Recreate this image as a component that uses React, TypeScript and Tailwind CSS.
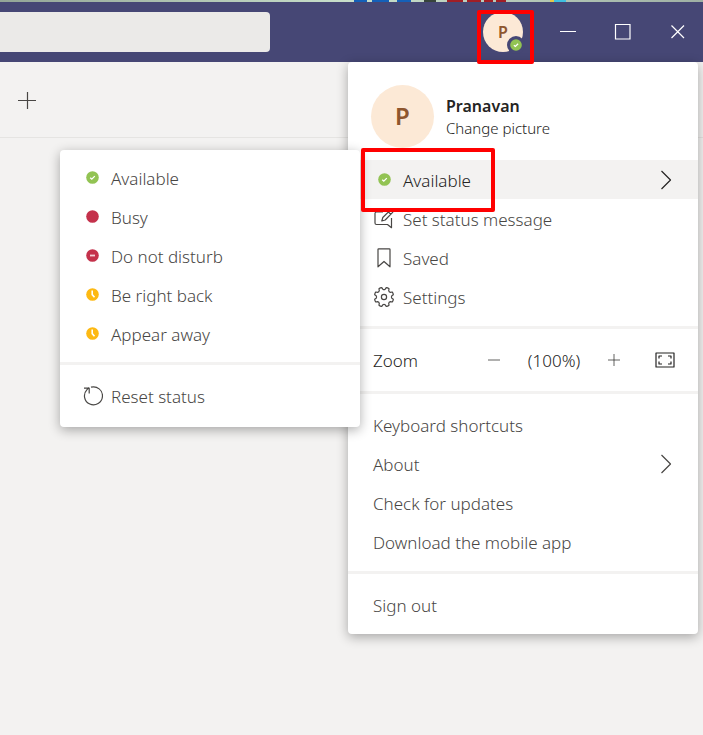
import React from "react";

type StatusKind = "available" | "busy" | "dnd" | "away";

const fontStack = "font-['Noto_Sans','Open_Sans',sans-serif]";

function StatusDot({ kind, className = "size-[13px]" }: { kind: StatusKind; className?: string }) {
  const fill = kind === "available" ? "#92c353" : kind === "away" ? "#fdb913" : "#c4314b";
  return (
    <svg viewBox="0 0 13 13" className={`shrink-0 ${className}`} aria-hidden="true">
      <circle cx="6.5" cy="6.5" r="6.3" fill={fill} />
      {kind === "available" && (
        <path d="M4.2 6.7 5.8 8.1 8.8 5.1" fill="none" stroke="#fff" strokeWidth="1.3" />
      )}
      {kind === "dnd" && <path d="M4 6.5h5" stroke="#f3d0d6" strokeWidth="1.8" />}
      {kind === "away" && (
        <path d="M6.2 2.6v4l2.3 2.6" fill="none" stroke="#fff" strokeWidth="1.6" />
      )}
    </svg>
  );
}

function Line({ d, className = "size-5", children }: { d: string; className?: string; children?: React.ReactNode }) {
  return (
    <svg viewBox="0 0 20 20" className={`shrink-0 ${className}`} fill="none" stroke="currentColor" strokeWidth="1.2" strokeLinejoin="round" aria-hidden="true">
      <path d={d} />
      {children}
    </svg>
  );
}

function Chevron() {
  return <Line className="ml-auto size-5" d="M5.500 1l9 9-9 9" />;
}

function MessageIcon() {
  return (
    <Line d="M9 3H2.500Q1 3 1 4.500v9.500Q1 15.500 2.500 15.500H13.500l4 3.200V9">
      <path d="m7.800 12 1-3.500L16 1.300a1.600 1.600 0 0 1 2.400 2.400L11.200 11ZM14.500 3l2.300 2.300" />
    </Line>
  );
}

const gearPath = (() => {
  const point = (degrees: number, radius: number) => {
    const a = (degrees * Math.PI) / 180;
    return `${(10 + radius * Math.sin(a)).toFixed(2)} ${(10 - radius * Math.cos(a)).toFixed(2)}`;
  };
  let d = "";
  for (let i = 0; i < 8; i++) {
    const a = i * 45 + 22.5;
    d += `${i === 0 ? "M" : "L"}${point(a - 9, 9.6)}Q${point(a, 10)} ${point(a + 9, 9.6)}`;
    d += `L${point(a + 14, 7.9)}Q${point(a + 22.5, 7)} ${point(a + 31, 7.9)}`;
  }
  return d + "Z";
})();

function GearIcon() {
  return (
    <Line d={gearPath}>
      <circle cx="10" cy="10" r="2.600" />
    </Line>
  );
}

function Divider() {
  return <div role="separator" className="h-[3px] bg-[#f3f2f1]" />;
}

function Item({ icon, children, chevron = false, active = false, marked = false }: { icon?: React.ReactNode; children: React.ReactNode; chevron?: boolean; active?: boolean; marked?: boolean }) {
  return (
    <button type="button" role="menuitem" className={`relative flex h-[39px] w-full items-center pr-[22px] pl-[25px] text-left ${active ? "bg-[#f3f2f1] text-[#252423]" : ""}`}>
      {icon && <span className="mr-2 flex w-[22px] justify-center">{icon}</span>}
      <span className="pt-0.5">{children}</span>
      {chevron && <Chevron />}
      {marked && <span className="absolute -top-3 left-[13px] z-20 h-16 w-[134px] rounded-xs border-4 border-[#ff0000]" />}
    </button>
  );
}

const statuses: { kind: StatusKind; label: string }[] = [
  { kind: "available", label: "Available" },
  { kind: "busy", label: "Busy" },
  { kind: "dnd", label: "Do not disturb" },
  { kind: "away", label: "Be right back" },
  { kind: "away", label: "Appear away" },
];

function StatusMenu() {
  return (
    <div role="menu" aria-label="Status" className="absolute top-[88px] right-[343px] z-10 w-[300px] rounded bg-white pt-2 shadow-[0_3px_12px_rgba(0,0,0,0.32)]">
      {statuses.map((s) => (
        <button key={s.label} type="button" role="menuitem" className="flex h-[39px] w-full items-center gap-3 px-[26px]">
          <StatusDot kind={s.kind} />
          <span className="pt-0.5">{s.label}</span>
        </button>
      ))}
      <div className="h-[9px]" />
      <Divider />
      <button type="button" role="menuitem" className="flex h-[62px] w-full items-center gap-2 px-[23px]">
        <Line d="M8 1.200A9 9 0 1 1 4 3.600L6 1.500M1 2.200h5.200v5.200" />
        <span className="pt-0.5">Reset status</span>
      </button>
    </div>
  );
}

function ProfileMenu() {
  return (
    <div role="menu" aria-label="Profile" className="absolute top-0 right-[5px] w-[350px] rounded bg-white shadow-[0_3px_12px_rgba(0,0,0,0.32)]">
      <div className="flex h-[98px] items-center gap-3 px-[23px] pt-2.5">
        <div className="flex size-[63px] items-center justify-center rounded-full bg-[#fce9d6] text-2xl font-semibold text-[#8e562e]">P</div>
        <div className="flex flex-col items-start pt-0.5 text-[#252423]">
          <span className="text-base leading-[22px] font-semibold">Pranavan</span>
          <button type="button" className="text-[15px] leading-[22px]">Change picture</button>
        </div>
      </div>
      <Item active chevron marked icon={<StatusDot kind="available" />}>Available</Item>
      <Item icon={<MessageIcon />}>Set status message</Item>
      <Item icon={<Line d="M4 1.500Q4 .8 4.700.8H15.300Q16 .8 16 1.500V18.800l-6-5.300-6 5.300Z" />}>Saved</Item>
      <Item icon={<GearIcon />}>Settings</Item>
      <div className="h-[10px]" />
      <Divider />
      <div className="flex h-[62px] items-center pr-[23px] pl-[25px] text-[#252423]">
        <span className="flex-1 pt-0.5">Zoom</span>
        <button type="button" aria-label="Zoom out"><Line className="size-3" d="M0 10h20" /></button>
        <span className="w-[108px] pt-0.5 text-center">(100%)</span>
        <button type="button" aria-label="Zoom in"><Line className="size-3" d="M0 10h20M10 0v20" /></button>
        <button type="button" aria-label="Full screen" className="ml-[35px]">
          <Line d="M1 3h18v14H1ZM7 6H4v2.500M13 6h3v2.500M7 14H4v-2.500M13 14h3v-2.500" />
        </button>
      </div>
      <Divider />
      <div className="pt-[11px] pb-[10px]">
        <Item>Keyboard shortcuts</Item>
        <Item chevron>About</Item>
        <Item>Check for updates</Item>
        <Item>Download the mobile app</Item>
      </div>
      <Divider />
      <div className="pt-[11px] pb-[10px]">
        <Item>Sign out</Item>
      </div>
    </div>
  );
}

function DesktopStrip() {
  return (
    <div className="h-0.5 bg-linear-to-r from-[#93a597] via-[#c9e0cb] to-[#9fb0a4]">
      <svg viewBox="0 0 703 2" preserveAspectRatio="none" className="block h-full w-full" aria-hidden="true">
        <path d="M354 1h13M372 1h17M397 1h14" stroke="#1560b8" strokeWidth="2" />
        <path d="M424 1h12" stroke="#37443c" strokeWidth="2" />
        <path d="M447 1h16M467 1h14M484 1h9M496 1h10" stroke="#a01e25" strokeWidth="2" />
        <path d="M550 1h4" stroke="#e5c84b" strokeWidth="2" />
        <path d="M554 1h12" stroke="#3fbfe0" strokeWidth="2" />
      </svg>
    </div>
  );
}

export default function App() {
  return (
    <div className={`min-h-screen overflow-hidden bg-[#f3f2f1] text-[17px] leading-6 font-light text-[#484644] ${fontStack}`}>
      <DesktopStrip />
      <header className="flex h-[60px] items-center justify-between bg-[#464775] pr-4 text-white">
        <input aria-label="Search" className="h-10 w-[270px] rounded-r bg-[#ebeae8]" />
        <div className="flex items-center">
          <button type="button" aria-label="Profile" className="relative mr-9 flex size-10 items-center justify-center rounded-full bg-[#fce9d6] text-base font-semibold text-[#8e562e]">
            P
            <span className="absolute -right-0.5 -bottom-0.5 rounded-full bg-[#464775] p-[3px]">
              <StatusDot kind="available" className="size-3" />
            </span>
            <span className="absolute -top-0.5 -left-1.5 z-20 h-[54px] w-[57px] rounded-xs border-4 border-[#ff0000]" />
          </button>
          <div className="flex items-center gap-[37px]">
            <button type="button" aria-label="Minimize">
              <svg viewBox="0 0 18 18" className="size-[18px]" stroke="currentColor" fill="none"><path d="M1 8.500h16" /></svg>
            </button>
            <button type="button" aria-label="Maximize">
              <svg viewBox="0 0 18 18" className="size-[18px]" stroke="currentColor" fill="none"><path d="M1.500 1.500h14.500v14.500h-14.500Z" strokeWidth="1.2" /></svg>
            </button>
            <button type="button" aria-label="Close">
              <svg viewBox="0 0 18 18" className="size-[18px]" stroke="currentColor" fill="none"><path d="m2.500 2.500 12.500 12.500M15 2.500 2.500 15" strokeWidth="1.2" /></svg>
            </button>
          </div>
        </div>
      </header>
      <main className="relative">
        <div className="flex h-[76px] items-center border-b border-[#e5e4e2] px-[18px]">
          <button type="button" aria-label="Add">
            <svg viewBox="0 0 18 18" className="size-[18px]" stroke="currentColor" fill="none"><path d="M0 9.500h18M9.500 1v17" strokeWidth="1.2" /></svg>
          </button>
        </div>
        <ProfileMenu />
        <StatusMenu />
      </main>
    </div>
  );
}
